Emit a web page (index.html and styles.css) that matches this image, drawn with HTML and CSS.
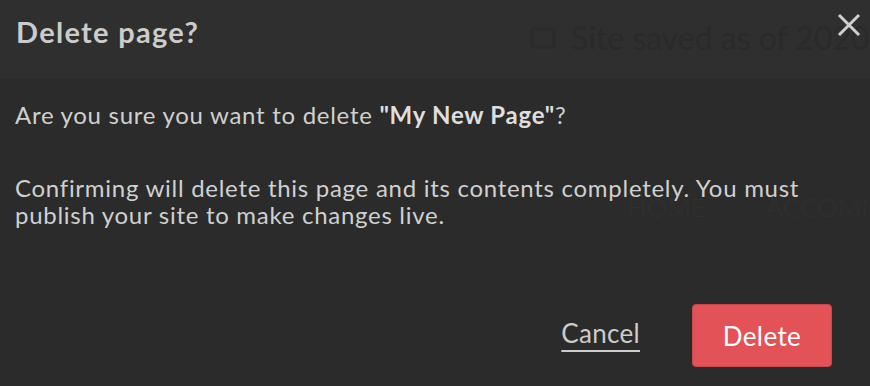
FILE: index.html
```html
<!DOCTYPE html>
<html lang="en">
<head>
<meta charset="utf-8">
<title>Delete page?</title>
<link rel="stylesheet" href="styles.css">
</head>
<body>
<div class="dialog" role="dialog" aria-labelledby="dlg-title">
  <header class="dialog-header">
    <h1 id="dlg-title" class="dialog-title">Delete page?</h1>
    <button class="close" aria-label="Close">
      <svg width="24" height="24" viewBox="0 0 24 24"><path d="M2 2 L22 22 M22 2 L2 22" stroke="#cfcfcf" stroke-width="3" fill="none"/></svg>
    </button>
  </header>
  <div class="dialog-body">
    <p class="para">Are you sure you want to delete <strong>"My New Page"</strong>?</p>
    <p class="para para-second">Confirming will delete this page and its contents completely. You must publish your site to make changes live.</p>
  </div>
  <footer class="dialog-footer">
    <a class="cancel" href="#">Cancel</a>
    <button class="delete">Delete</button>
  </footer>
</div>
<div class="backdrop" aria-hidden="true">
  <div class="ghost ghost-saved">
    <svg class="ghost-icon" width="26" height="22" viewBox="0 0 26 22"><rect x="2" y="2" width="22" height="18" rx="2" fill="none" stroke="#2b2b2b" stroke-width="3"/></svg>
    <span>Site saved as of 2020-05-12</span>
  </div>
  <div class="ghost ghost-nav"><span>HOME</span><span>ACCOMMODATION</span></div>
</div>
</body>
</html>
```

FILE: styles.css
```css
* { box-sizing: border-box; }
html, body {
  margin: 0;
  padding: 0;
  width: 870px;
  height: 386px;
  overflow: hidden;
  background: #2b2b2b;
  font-family: Lato, "Open Sans", sans-serif;
}
body { position: relative; }
.backdrop {
  position: absolute;
  inset: 0;
  z-index: 1;
  pointer-events: none;
  overflow: hidden;
}
.ghost {
  position: absolute;
  white-space: nowrap;
  font-family: Lato, sans-serif;
}
.ghost-saved {
  left: 530px;
  top: 18px;
  display: flex;
  align-items: center;
  gap: 15px;
  font-size: 32px;
  font-weight: 400;
  color: #2a2a2a;
}
.ghost-nav {
  left: 627px;
  top: 191px;
  display: flex;
  gap: 60px;
  font-size: 26px;
  font-weight: 300;
  color: #303030;
}
.dialog {
  display: flex;
  flex-direction: column;
  height: 386px;
}
.dialog-header {
  height: 79px;
  background: #2f2f2f;
  display: flex;
  align-items: center;
  justify-content: space-between;
  padding: 0 0 15px 16px;
}
.dialog-title {
  margin: 0;
  font-size: 29px;
  font-weight: 700;
  letter-spacing: 1.3px;
  color: #cccccc;
  line-height: 34px;
}
.close {
  position: relative;
  z-index: 4;
  align-self: flex-start;
  margin: 13px 9px 0 0;
  padding: 0;
  border: 0;
  background: none;
  width: 24px;
  height: 24px;
  display: block;
}
.close svg { display: block; }
.dialog-body {
  padding: 22px 10px 0 15px;
  color: #d0d0d0;
  font-size: 24px;
  letter-spacing: 0.72px;
  line-height: 27px;
}
.para { margin: 0; }
.para strong { font-weight: 700; color: #dedede; }
.para-second { margin-top: 46px; }
.dialog-footer {
  margin-top: auto;
  display: flex;
  justify-content: flex-end;
  align-items: center;
  gap: 52px;
  padding: 0 38px 19px 0;
}
.cancel {
  color: #cccccc;
  font-size: 26px;
  letter-spacing: 0.3px;
  text-decoration: underline;
  text-decoration-thickness: 2px;
  text-underline-offset: 7px;
  margin-bottom: 6px;
}
.delete {
  width: 140px;
  height: 63px;
  background: #e25256;
  border: 1px solid #c8474b;
  border-radius: 4px;
  color: #ffffff;
  font-family: Lato, sans-serif;
  font-size: 26px;
  letter-spacing: 0.4px;
  padding: 0;
}
```
